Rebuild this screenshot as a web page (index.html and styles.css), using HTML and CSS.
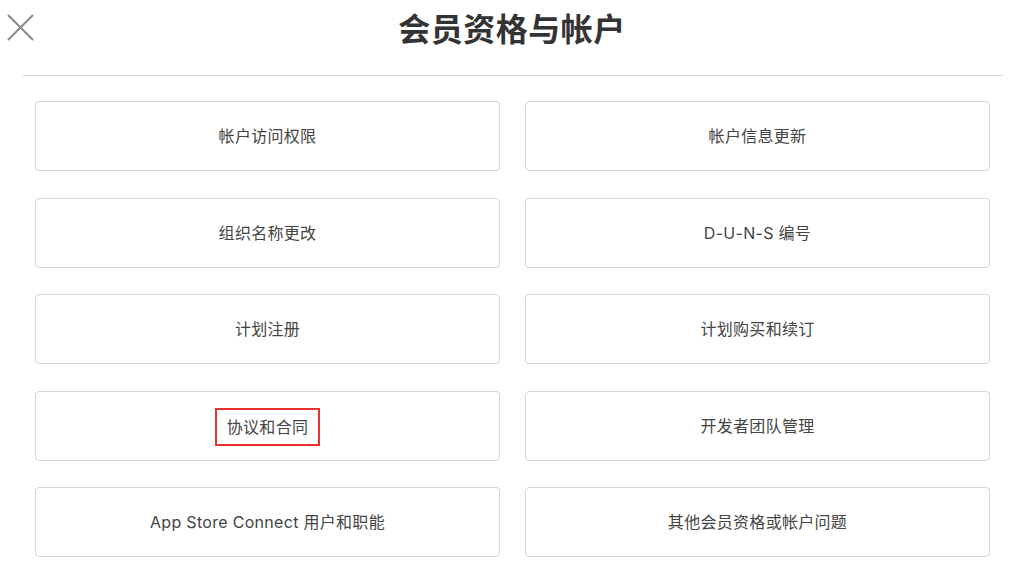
FILE: index.html
```html
<!DOCTYPE html>
<html lang="zh-CN">
<head>
<meta charset="utf-8">
<link rel="stylesheet" href="styles.css">
</head>
<body>
<div class="page">
  <header class="header">
    <button class="close" aria-label="关闭">
      <svg width="27" height="27" viewBox="0 0 27 27"><path d="M1 1L26 26M26 1L1 26" stroke="#8a8a8a" stroke-width="2" fill="none"/></svg>
    </button>
    <h1 class="title">会员资格与帐户</h1>
  </header>
  <div class="divider"></div>
  <div class="grid">
    <a class="card"><span>帐户访问权限</span></a>
    <a class="card"><span>帐户信息更新</span></a>
    <a class="card"><span>组织名称更改</span></a>
    <a class="card"><span>D-U-N-S 编号</span></a>
    <a class="card"><span>计划注册</span></a>
    <a class="card"><span>计划购买和续订</span></a>
    <a class="card"><span class="highlight">协议和合同</span></a>
    <a class="card"><span>开发者团队管理</span></a>
    <a class="card"><span>App Store Connect 用户和职能</span></a>
    <a class="card"><span>其他会员资格或帐户问题</span></a>
  </div>
</div>
</body>
</html>
```

FILE: styles.css
```css
html, body {
  margin: 0;
  padding: 0;
  background: #fff;
}
body {
  font-family: Inter, "Noto Sans CJK SC", sans-serif;
  color: #333;
}
.page {
  width: 1015px;
}
.header {
  position: relative;
  height: 62px;
  display: flex;
  align-items: center;
  justify-content: center;
  padding-left: 9px;
}
.close {
  position: absolute;
  left: 7px;
  top: 14px;
  padding: 0;
  border: 0;
  background: none;
  width: 27px;
  height: 27px;
}
.close svg { display: block; }
.title {
  margin: 0;
  font-size: 32px;
  font-weight: 700;
  color: #333;
  letter-spacing: 0.5px;
  line-height: 1;
  position: relative;
  top: -1px;
}
.divider {
  margin: 13px 12px 0 23px;
  height: 1px;
  background: #d8d8d8;
}
.grid {
  display: grid;
  grid-template-columns: 465px 465px;
  column-gap: 25px;
  row-gap: 26.5px;
  padding: 25px 0 0 35px;
}
.card {
  box-sizing: border-box;
  height: 70px;
  padding-bottom: 2px;
  border: 1px solid #d6d6d6;
  border-radius: 4px;
  display: flex;
  align-items: center;
  justify-content: center;
  font-size: 16px;
  color: #444;
  letter-spacing: 0.3px;
}
.highlight {
  border: 2px solid #e8302f;
  padding: 4px 10px 6px 10px;
  position: relative;
  top: 2px;
}
```
